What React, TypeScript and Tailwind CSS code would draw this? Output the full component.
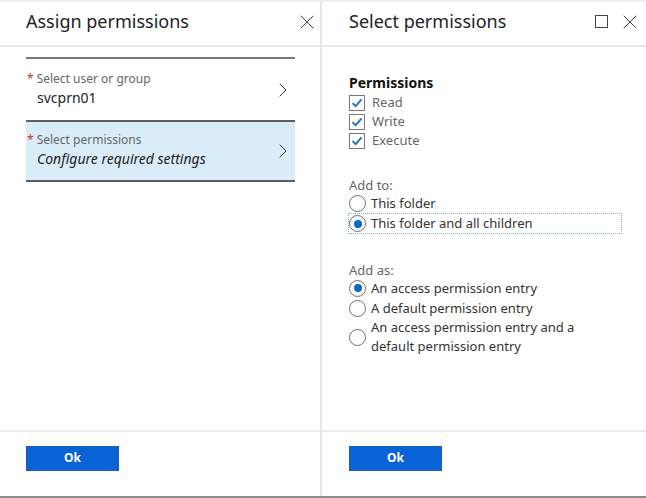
import { X, ChevronRight } from 'lucide-react';

const font = { fontFamily: '"Noto Sans", "Open Sans", sans-serif' };

function Checkbox({ label }: { label: string }) {
  return (
    <div className="flex items-center h-[19px] gap-[7px]">
      <span className="w-[16px] h-[16px] border border-[#7d7388] bg-white flex items-center justify-center">
        <svg width="12" height="12" viewBox="0 0 12 12">
          <path d="M1.5 6.2 L4.6 9.2 L10.6 2.4" fill="none" stroke="#1f6fbf" strokeWidth="1.8" />
        </svg>
      </span>
      <span className="text-[13px] text-[#666]">{label}</span>
    </div>
  );
}

function Radio({ checked, children, focused }: { checked?: boolean; children: React.ReactNode; focused?: boolean }) {
  return (
    <div
      className={
        'flex items-center gap-[5px] ' +
        (focused ? 'border border-dotted border-[#7fb0d6] -ml-[1px] mr-[24px] h-[21px]' : 'h-[20px]')
      }
    >
      <span className="w-[17px] h-[17px] rounded-full border border-[#6f6f6f] bg-white flex items-center justify-center shrink-0">
        {checked && <span className="w-[8px] h-[8px] rounded-full bg-[#1466c4]" />}
      </span>
      <span className="text-[13px] text-[#333] leading-[19px]">{children}</span>
    </div>
  );
}

function OkButton() {
  return (
    <button className="w-[93px] h-[25px] bg-[#0a63d6] text-white text-[12px] font-bold border border-[#1c5fb4]">
      Ok
    </button>
  );
}

export default function App() {
  return (
    <div className="w-[646px] h-[498px] bg-white flex border-t-2 border-t-[#ededed] border-b-2 border-b-[#8a8a8a]" style={font}>
      {/* left blade */}
      <div className="w-[322px] flex flex-col border-r-2 border-r-[#e6e6e6]">
        <div className="h-[45px] flex items-center justify-between pl-[26px] pr-[1px] pb-[4px] border-b-2 border-b-[#e8e8e8]">
          <span className="text-[18px] text-[#222]">Assign permissions</span>
          <X size={24} strokeWidth={1} className="text-[#444]" />
        </div>
        <div className="flex-1 pt-[10px] pl-[26px] pr-[25px]">
          <div className="border-t-2 border-t-[#7a7a7a] h-[63px] flex items-center justify-between">
            <div className="pl-[1px]">
              <div className="text-[12px] text-[#666] leading-[16px]">
                <span className="text-[#b5353b] mr-[3px]">*</span>Select user or group
              </div>
              <div className="text-[14px] text-[#222] pl-[10px] leading-[22px]">svcprn01</div>
            </div>
            <ChevronRight size={24} strokeWidth={1} className="text-[#333]" />
          </div>
          <div className="border-t-2 border-t-[#5f5f5f] border-b-2 border-b-[#5f5f5f] h-[62px] bg-[#dbecf9] flex items-center justify-between">
            <div className="pl-[1px]">
              <div className="text-[12px] text-[#666] leading-[16px]">
                <span className="text-[#b5353b] mr-[3px]">*</span>Select permissions
              </div>
              <div className="text-[14px] text-[#222] italic pl-[10px] leading-[22px]">Configure required settings</div>
            </div>
            <ChevronRight size={24} strokeWidth={1} className="text-[#333]" />
          </div>
        </div>
        <div className="h-[66px] border-t-2 border-t-[#ececec] pl-[26px] pt-[12px]">
          <OkButton />
        </div>
      </div>

      {/* right blade */}
      <div className="flex-1 flex flex-col">
        <div className="h-[45px] flex items-center justify-between pl-[27px] pr-[4px] pb-[4px] border-b-2 border-b-[#e8e8e8]">
          <span className="text-[18px] text-[#222]">Select permissions</span>
          <div className="flex items-center gap-[10px]">
            <span className="w-[13px] h-[13px] border border-[#444]" />
            <X size={24} strokeWidth={1} className="text-[#444]" />
          </div>
        </div>
        <div className="flex-1 pl-[27px] pt-[26px]">
          <div className="text-[14px] font-bold text-[#111] leading-[20px]">Permissions</div>
          <Checkbox label="Read" />
          <Checkbox label="Write" />
          <Checkbox label="Execute" />

          <div className="mt-[28px] text-[13px] text-[#666] leading-[15px]">Add to:</div>
          <Radio>This folder</Radio>
          <Radio checked focused>This folder and all children</Radio>

          <div className="mt-[29px] text-[13px] text-[#666] leading-[15px]">Add as:</div>
          <Radio checked>An access permission entry</Radio>
          <Radio>A default permission entry</Radio>
          <div className="flex items-center gap-[5px]">
            <span className="w-[17px] h-[17px] rounded-full border border-[#6f6f6f] bg-white shrink-0" />
            <span className="text-[13px] text-[#333] leading-[19px]">
              An access permission entry and a<br />default permission entry
            </span>
          </div>
        </div>
        <div className="h-[66px] border-t-2 border-t-[#ececec] pl-[27px] pt-[12px]">
          <OkButton />
        </div>
      </div>
    </div>
  );
}
